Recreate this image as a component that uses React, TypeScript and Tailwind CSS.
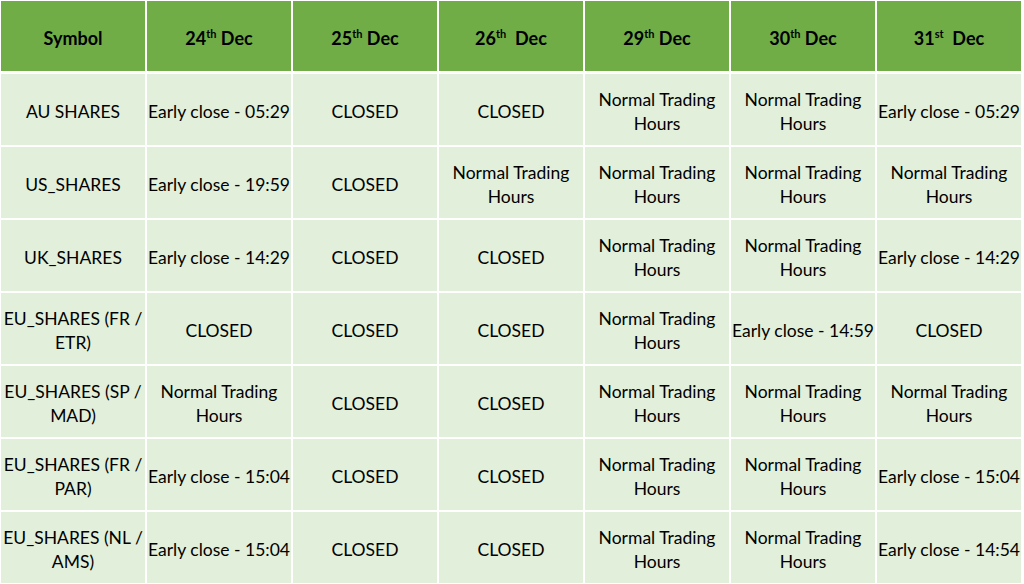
import React from "react";

const headers: [string, string, boolean][] = [
  ["24", "th", false],
  ["25", "th", false],
  ["26", "th", true],
  ["29", "th", false],
  ["30", "th", false],
  ["31", "st", true],
];

const E = (t: string) => `Early close - ${t}`;
const N = "Normal Trading Hours";
const C = "CLOSED";

const rows: string[][] = [
  ["AU SHARES", E("05:29"), C, C, N, N, E("05:29")],
  ["US_SHARES", E("19:59"), C, N, N, N, N],
  ["UK_SHARES", E("14:29"), C, C, N, N, E("14:29")],
  ["EU_SHARES (FR / ETR)", C, C, C, N, E("14:59"), C],
  ["EU_SHARES (SP / MAD)", N, C, C, N, N, N],
  ["EU_SHARES (FR / PAR)", E("15:04"), C, C, N, N, E("15:04")],
  ["EU_SHARES (NL / AMS)", E("15:04"), C, C, N, N, E("14:54")],
];

export default function App() {
  return (
    <div
      className="w-[1024px] h-[584px] bg-white pl-[1px] pt-[1px] overflow-hidden text-black"
      style={{ fontFamily: "Lato, 'Open Sans', sans-serif" }}
    >
      <div className="grid grid-cols-[repeat(7,144px)] gap-x-[2px]">
        <div className="h-[70px] pt-[4px] bg-[#70ad47] flex items-center justify-center font-bold text-[18px]">
          Symbol
        </div>
        {headers.map(([d, s, wide]) => (
          <div
            key={d}
            className="h-[70px] pt-[4px] bg-[#70ad47] flex items-center justify-center font-bold text-[18px]"
          >
            <span>
              {d}
              <span className="text-[11px] font-bold relative -top-[7px]">{s}</span>
              {wide ? "\u00a0 Dec" : " Dec"}
            </span>
          </div>
        ))}
      </div>
      <div className="grid grid-cols-[repeat(7,144px)] gap-x-[2px] gap-y-[2px] mt-[3px]">
        {rows.flatMap((r, i) =>
          r.map((c, j) => (
            <div
              key={`${i}-${j}`}
              className="h-[71px] pt-[4px] bg-[#e2efda] flex items-center justify-center text-center text-[17.5px] leading-[24px]"
            >
              {j === 0 && c.includes("(") ? (
                <span>
                  {c.slice(0, c.lastIndexOf(" "))}
                  <br />
                  {c.slice(c.lastIndexOf(" ") + 1)}
                </span>
              ) : c === N ? (
                <span>
                  Normal Trading
                  <br />
                  Hours
                </span>
              ) : (
                <span className="whitespace-nowrap">{c}</span>
              )}
            </div>
          ))
        )}
      </div>
    </div>
  );
}
